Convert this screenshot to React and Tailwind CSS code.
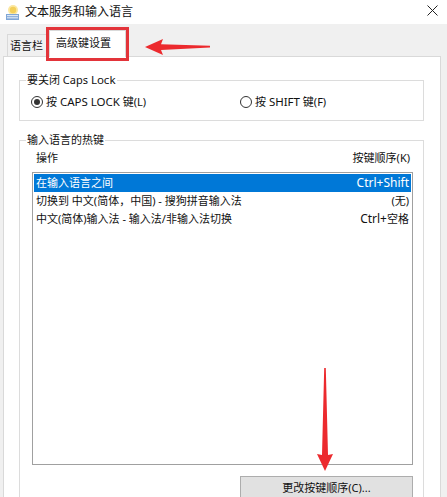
export default function App() {
  const font = { fontFamily: '"Noto Sans", "Noto Sans CJK SC", sans-serif' };
  return (
    <div className="relative w-[447px] h-[497px] overflow-hidden bg-[#f0f0f0] text-[#111]" style={font}>
      {/* title bar */}
      <div className="h-[24px] bg-white flex items-center pl-[4px] pr-[8px]">
        <svg width="17" height="17" viewBox="0 0 17 17" className="shrink-0">
          <circle cx="9" cy="6" r="5" fill="#fbe7a0" />
          <circle cx="9" cy="6" r="3.2" fill="#f3cf5a" />
          <rect x="2" y="10" width="13" height="6" fill="#7fa6d6" />
          <rect x="3" y="11" width="11" height="1.2" fill="#dbe7f5" />
          <rect x="3" y="13.2" width="11" height="1.2" fill="#dbe7f5" />
        </svg>
        <span className="ml-[4px] text-[12px] leading-[16px]">文本服务和输入语言</span>
        <svg width="11" height="11" viewBox="0 0 11 11" className="ml-auto mr-[1px] -mt-[4px]">
          <path d="M0.5 0.5 L10.5 10.5 M10.5 0.5 L0.5 10.5" stroke="#222" strokeWidth="1" />
        </svg>
      </div>

      {/* tabs */}
      <div className="flex items-end pl-[7px] pt-[6px] h-[32px]">
        <div className="h-[22px] w-[43px] border border-b-0 border-[#d9d9d9] bg-[#f0f0f0] flex items-center pl-[2px] text-[11px] leading-[14px]">
          语言栏
        </div>
        <div className="relative z-10 -ml-px -mb-px h-[27px] w-[77px] border border-b-0 border-[#d9d9d9] bg-white flex items-center pl-[6px] pb-[2px] text-[11px] leading-[14px]">
          高级键设置
        </div>
      </div>

      {/* tab panel */}
      <div className="ml-[3px] w-[438px] h-[460px] border border-[#d9d9d9] bg-white pt-[15px] pl-[15px]">
        <fieldset className="w-[405px] border border-[#dcdcdc] pb-[10px]">
          <legend className="ml-[6px] px-[1px] text-[11px] leading-[16px]">要关闭 Caps <span className="text-[11.5px]">Lock</span></legend>
          <div className="mt-[6px] pl-[11px] flex items-center h-[16px] text-[11px] leading-[16px]">
            <div className="w-[209px] flex items-center">
              <span className="w-[12px] h-[12px] rounded-full border border-[#333] bg-white flex items-center justify-center">
                <span className="w-[6px] h-[6px] rounded-full bg-[#333]" />
              </span>
              <span className="ml-[3px]">按 <span className="text-[11.5px]">CAPS LOCK</span> 键(L)</span>
            </div>
            <div className="flex items-center">
              <span className="w-[12px] h-[12px] rounded-full border border-[#333] bg-white" />
              <span className="ml-[3px]">按 <span className="text-[11.5px]">SHIFT</span> 键(F)</span>
            </div>
          </div>
        </fieldset>

        <fieldset className="mt-[11px] w-[405px] h-[400px] border border-[#dcdcdc]">
          <legend className="ml-[6px] px-[1px] text-[11px] leading-[16px]">输入语言的热键</legend>
          <div className="mt-[2px] h-[16px] flex items-center justify-between pl-[16px] pr-[13px] text-[11px] leading-[16px]">
            <span>操作</span>
            <span>按键顺序(K)</span>
          </div>
          <div className="mt-[6px] ml-[12px] w-[381px] h-[293px] border border-[#a0a0a0] pt-px px-px text-[11px]">
            <div className="h-[18px] bg-[#0078d7] text-white flex items-center justify-between pl-[2px] pr-[2px] leading-[14px]">
              <span>在输入语言之间</span>
              <span className="text-[12px]">Ctrl+Shift</span>
            </div>
            <div className="h-[18px] flex items-center justify-between pl-[2px] pr-[2px] leading-[14px]">
              <span>切换到 中文(简体，中国) - 搜狗拼音输入法</span>
              <span>(无)</span>
            </div>
            <div className="h-[18px] flex items-center justify-between pl-[2px] pr-[2px] leading-[14px]">
              <span>中文(简体)输入法 - 输入法/非输入法切换</span>
              <span><span className="text-[12px]">Ctrl+</span>空格</span>
            </div>
          </div>
          <div className="mt-[11px] ml-[220px] w-[173px] h-[24px] border border-[#adadad] bg-[#e1e1e1] flex items-center justify-center text-[11px] leading-[14px]">
            更改按键顺序(C)...
          </div>
        </fieldset>
      </div>

      {/* annotations */}
      <div className="absolute left-[46px] top-[27px] w-[83px] h-[34px] border-[3px] border-[#e3343a] z-20 pointer-events-none" />
      <svg className="absolute left-0 top-0 z-20 pointer-events-none" width="447" height="497" viewBox="0 0 447 497">
        <polygon points="145,47 163,39 161,44.3 210,45.8 210,47.6 161,50 163,55" fill="#ec2a2e" />
        <polygon points="324.2,368 325.8,368 328,455 333,454 325,471 317,454 322,455" fill="#ec2a2e" />
      </svg>
    </div>
  );
}
